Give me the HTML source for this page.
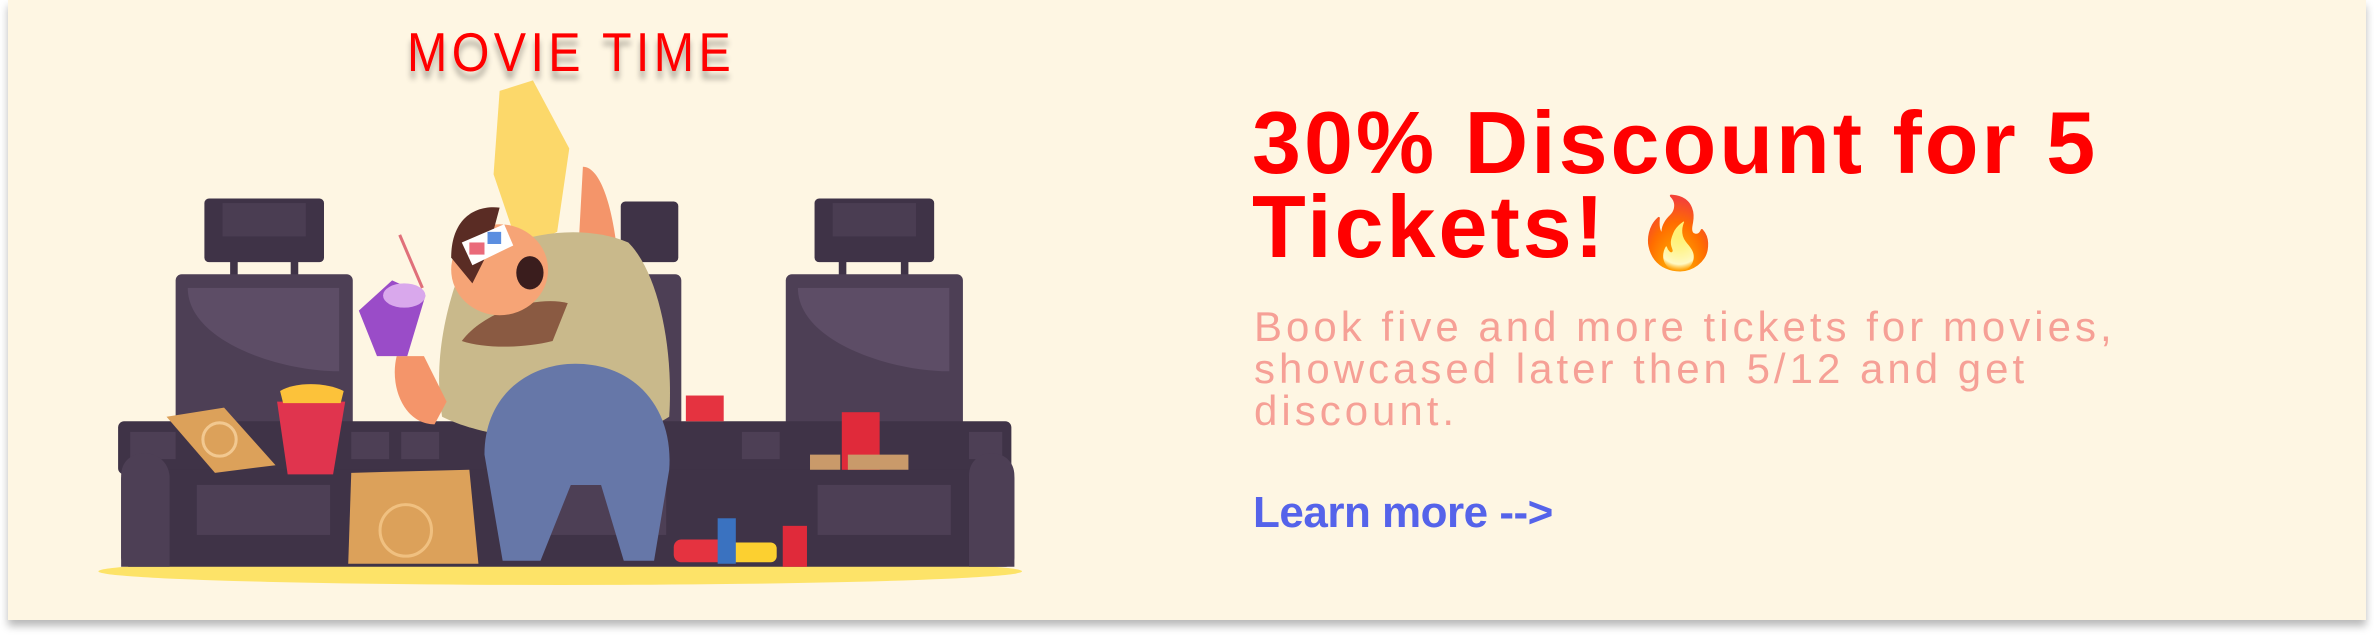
<!DOCTYPE html>
<html><head><meta charset="utf-8"><style>
html,body{margin:0;padding:0;background:#fff;width:2374px;height:638px;overflow:hidden}
.card{position:absolute;left:8px;top:0;width:2358px;height:620px;background:#fef6e3;box-shadow:0 6px 8px rgba(0,0,0,0.28)}
svg{position:absolute;left:0;top:0}
.mt{position:absolute;left:407px;top:20px;font:55px "Liberation Sans",sans-serif;color:#f00;letter-spacing:5px;transform:scaleX(0.88);transform-origin:left top;text-shadow:0 8px 6px rgba(0,0,0,0.3);white-space:nowrap}
.h{position:absolute;left:1252px;top:101px;font:bold 88px/84px "Liberation Sans",sans-serif;color:#f00;letter-spacing:3px;white-space:nowrap}
.p{position:absolute;left:1254px;top:306px;font:42px/42px "Liberation Sans",sans-serif;color:#f6a096;letter-spacing:4px;white-space:nowrap}
.l{position:absolute;left:1253px;top:488px;font:bold 44px "Liberation Sans",sans-serif;color:#5563ea;letter-spacing:-0.5px;white-space:nowrap}
</style></head><body>
<div class="card"></div>
<svg width="2374" height="638" viewBox="0 0 1568 421" preserveAspectRatio="none">
<ellipse cx="370" cy="377" rx="305" ry="9" fill="#fde368"/>
<rect x="135" y="131" width="79" height="42" rx="3" fill="#3f3347"/><rect x="147" y="134" width="55" height="22" fill="#4a3d52"/>
<rect x="152" y="172" width="5" height="10" fill="#3f3347"/><rect x="192" y="172" width="5" height="10" fill="#3f3347"/>
<rect x="116" y="181" width="117" height="112" rx="4" fill="#4d3f55"/><path d="M124 190h100v55c-40 0-100-20-100-55z" fill="#5d4d66"/>
<rect x="410" y="133" width="38" height="40" rx="3" fill="#3f3347"/><rect x="415" y="181" width="35" height="110" rx="4" fill="#4d3f55"/>
<rect x="538" y="131" width="79" height="42" rx="3" fill="#3f3347"/><rect x="550" y="134" width="55" height="22" fill="#4a3d52"/>
<rect x="554" y="172" width="5" height="10" fill="#3f3347"/><rect x="595" y="172" width="5" height="10" fill="#3f3347"/>
<rect x="519" y="181" width="117" height="112" rx="4" fill="#4d3f55"/><path d="M527 190h100v55c-40 0-100-20-100-55z" fill="#5d4d66"/>
<rect x="78" y="278" width="590" height="35" rx="4" fill="#3f3347"/>
<rect x="86" y="285" width="30" height="18" fill="#4d3f55"/><rect x="232" y="285" width="25" height="18" fill="#4d3f55"/><rect x="265" y="285" width="25" height="18" fill="#4d3f55"/><rect x="490" y="285" width="25" height="18" fill="#4d3f55"/><rect x="640" y="285" width="22" height="18" fill="#4d3f55"/>
<rect x="80" y="310" width="590" height="64" rx="6" fill="#3f3347"/>
<rect x="130" y="320" width="88" height="33" fill="#4d3f55"/><rect x="540" y="320" width="88" height="33" fill="#4d3f55"/><rect x="340" y="320" width="100" height="33" fill="#4d3f55"/>
<path d="M80 374v-60c0-20 30-20 32 0v60z" fill="#4d3f55"/><path d="M640 374v-60c0-20 30-20 30 0v60z" fill="#4d3f55"/>
<path d="M385 110c10 0 18 20 22 50l12 60-40 0z" fill="#f4956a"/>
<path d="M330 60l22-7 24 45-8 55-25 12-17-50z" fill="#fcd86a"/>
<path d="M300 190c20-35 80-45 115-30 20 20 30 70 27 115-30 20-110 20-150 0-5-30 0-60 8-85z" fill="#c9b98b"/>
<path d="M305 225c15-20 50-30 70-25l-10 25c-20 5-45 5-60 0z" fill="#8a5a42"/>
<ellipse cx="330" cy="178" rx="32" ry="30" fill="#f6a476"/>
<path d="M298 170c0-25 15-35 32-33l-8 30-10 20z" fill="#5a2c24"/>
<path d="M305 160l28-12 6 14-27 13z" fill="#fff"/><rect x="310" y="160" width="10" height="8" fill="#ea6a7a"/><rect x="322" y="153" width="9" height="8" fill="#5b8ee0"/>
<ellipse cx="350" cy="180" rx="9" ry="11" fill="#3a1d1d"/>
<path d="M320 300c0-40 30-60 60-60 40 0 65 30 62 70l-10 60-20 0-15-50-20 0-20 50-25 0z" fill="#6677a8"/>
<path d="M262 235c-5 20 5 45 25 45l8-15-15-30z" fill="#f4956a"/>
<path d="M237 205l22-20 22 10-12 40h-20z" fill="#9a4cc8"/><ellipse cx="267" cy="195" rx="14" ry="8" fill="#d9a8ec"/>
<path d="M264 155l15 35" stroke="#e0707a" stroke-width="2"/>
<path d="M110 275l38-6 34 38-40 5z" fill="#dca15a"/><circle cx="145" cy="290" r="11" fill="none" stroke="#f2c890" stroke-width="2"/>
<path d="M183 265h45l-8 48h-30z" fill="#e0344e"/><path d="M185 258c10-6 30-6 42 0l-2 8h-38z" fill="#fcc23a"/>
<path d="M232 312l78-2 6 62h-86z" fill="#dca15a"/><circle cx="268" cy="350" r="17" fill="none" stroke="#f0c080" stroke-width="2"/>
<rect x="453" y="261" width="25" height="17" fill="#e53340"/>
<rect x="556" y="272" width="25" height="38" fill="#e02a3a"/><path d="M535 300h20v10h-20zM560 300h40v10h-40z" fill="#c99a6a"/>
<rect x="445" y="356" width="35" height="15" rx="5" fill="#e53340"/><rect x="480" y="358" width="33" height="13" rx="4" fill="#fcd030"/><rect x="474" y="342" width="12" height="30" fill="#3a72c0"/><rect x="517" y="347" width="16" height="27" fill="#e02a3a"/>
</svg>
<div class="mt">MOVIE TIME</div>
<div class="h">30% Discount for 5<br>Tickets! <span style="font-size:70px">🔥</span></div>
<div class="p">Book five and more tickets for movies,<br>showcased later then 5/12 and get<br>discount.</div>
<div class="l">Learn more --&gt;</div>
</body></html>
